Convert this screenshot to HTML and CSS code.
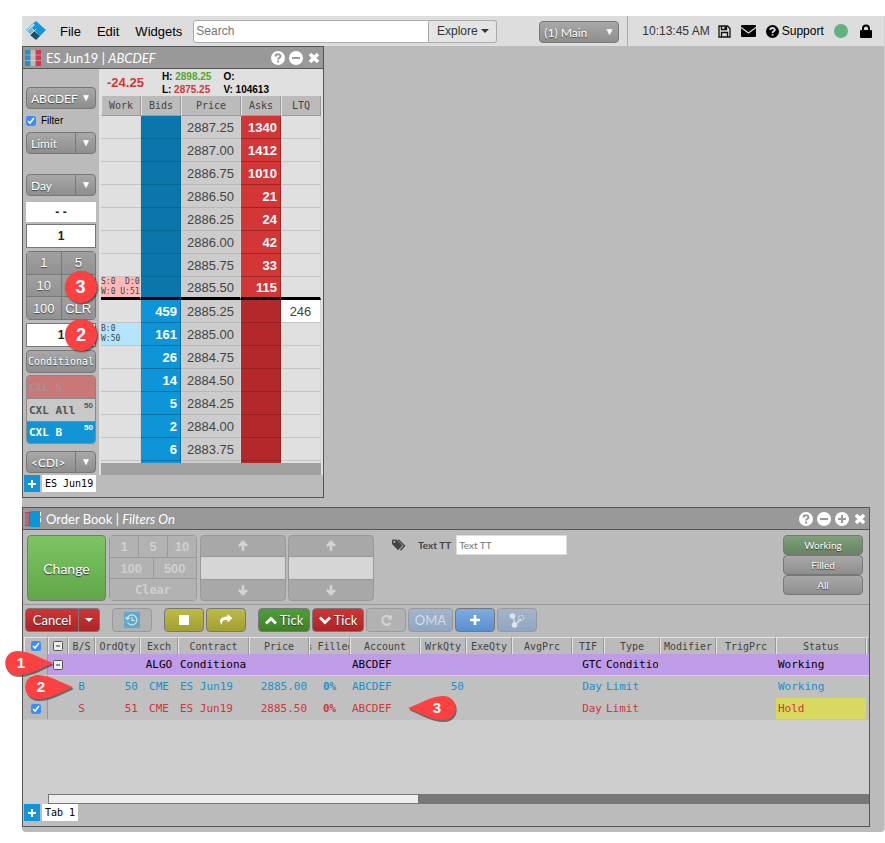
FILE: index.html
```html
<!DOCTYPE html>
<html lang="en">
<head>
    <meta charset="utf-8">
    <title>Main</title>
    <link rel="stylesheet" href="styles.css">
</head>
<body>
    <svg width="0" height="0" class="defs">
        <symbol id="help" viewBox="0 0 14 14"><circle cx="7" cy="7" r="7" fill="currentColor"/><path class="cut" d="M4.6 5.4C4.6 2.6 9.5 2.6 9.5 5.2C9.5 6.9 7.1 6.7 7.1 8.5M7.1 9.6V11.4"/></symbol>
        <symbol id="minus" viewBox="0 0 14 14"><circle cx="7" cy="7" r="7" fill="currentColor"/><path class="cut" d="M3 7H11"/></symbol>
        <symbol id="plus" viewBox="0 0 14 14"><circle cx="7" cy="7" r="7" fill="currentColor"/><path class="cut" d="M3 7H11M7 3V11"/></symbol>
        <symbol id="close" viewBox="0 0 14 14"><path d="M3 3L11 11M11 3L3 11" stroke="currentColor" stroke-width="3.6"/></symbol>
        <symbol id="arrow" viewBox="0 0 12 12"><path d="M6 11V2M2 6L6 2L10 6" fill="none" stroke="currentColor" stroke-width="2.5"/></symbol>
        <symbol id="collapse" viewBox="0 0 10 10"><rect x="0.5" y="0.5" width="9" height="9" rx="1" fill="#eee" stroke="#555"/><path d="M3 5H7" stroke="#333"/></symbol>
    </svg>

    <div class="app">
        <header class="topbar">
            <svg class="logo" viewBox="0 0 20 20"><path d="M10 0L20 9L14 15L4 5Z" fill="#1497d4"/><path d="M7 2L9 4L2 11L0 9Z" fill="#8fd0ea"/><path d="M4 6L9 11L6 15L0 9Z" fill="#6fb9d8"/><path d="M8 10L14 15L10 19L4 14Z" fill="#17526e"/><path d="M1 10L8 3M4 14L10 8" stroke="#ddd" stroke-width="1"/></svg>
            <nav class="menu">
                <a href="#">File</a>
                <a href="#">Edit</a>
                <a href="#">Widgets</a>
            </nav>
            <div class="search">
                <input type="text" placeholder="Search" aria-label="Search">
                <button>Explore <span class="caret"></span></button>
            </div>
            <div class="select workspace"><select aria-label="Workspace"><option>(1) Main</option></select></div>
            <div class="tools">
                <span class="clock">10:13:45 AM</span>
                <svg width="13" height="13" viewBox="0 0 13 13"><path d="M1 1H9.5L12 3.5V12H1ZM3.5 1V4.5H8.5V1M3.5 12V7.5H9.5V12" fill="none" stroke="#111" stroke-width="1.3"/><path d="M6.5 1H8.5V4H6.5Z" fill="#111"/></svg>
                <svg width="15" height="12" viewBox="0 0 15 12"><rect width="15" height="12" rx="1"/><path d="M0 2.5L7.5 8L15 2.5" fill="none" stroke="#ddd" stroke-width="1.2"/></svg>
                <a class="support" href="#"><svg width="13" height="13"><use href="#help"/></svg>Support</a>
                <span class="online"></span>
                <svg width="12" height="14" viewBox="0 0 12 14"><rect y="6" width="12" height="8" rx="1"/><path d="M3 7V4.5C3 0.5 9 0.5 9 4.5V7" fill="none" stroke="#000" stroke-width="2"/></svg>
            </div>
        </header>

        <section class="window trader">
            <div class="titlebar">
                <svg class="wicon" viewBox="0 0 16 16"><path fill="#1994d0" d="M0 0H5V16H0Z"/><path fill="#bbb" d="M6 0H10V16H6Z"/><path fill="#d5354e" d="M11 0H16V16H11Z"/><path d="M0 5H16M0 10.5H16" stroke="#ddd" stroke-opacity=".5"/></svg>
                <h2>ES Jun19 | <em>ABCDEF</em></h2>
                <button aria-label="Help"><svg><use href="#help"/></svg></button>
                <button aria-label="Minimize"><svg><use href="#minus"/></svg></button>
                <button aria-label="Close"><svg><use href="#close"/></svg></button>
            </div>
            <div class="trader-body">
                <div class="sidebar">
                    <div class="select"><select aria-label="Account"><option>ABCDEF</option></select></div>
                    <label class="filter"><input type="checkbox" checked> Filter</label>
                    <div class="select split"><select aria-label="Order type"><option>Limit</option></select></div>
                    <div class="select split tif"><select aria-label="Time in force"><option>Day</option></select></div>
                    <input class="position" type="text" value="- -" aria-label="Position">
                    <input class="qty" type="text" value="1" aria-label="Quantity">
                    <div class="pad">
                        <button>1</button>
                        <button>5</button>
                        <button>10</button>
                        <button aria-label="Add quantity"><span class="badge">3</span></button>
                        <button>100</button>
                        <button>CLR</button>
                    </div>
                    <div class="qty-wrap">
                        <input class="qty" type="text" value="1" aria-label="Conditional quantity">
                        <span class="badge small">2</span>
                    </div>
                    <button class="conditional">Conditional</button>
                    <div class="cxl">
                        <button class="cxl-s">CXL S</button>
                        <button class="cxl-all">CXL All<sup>50</sup></button>
                        <button class="cxl-b">CXL B<sup>50</sup></button>
                    </div>
                    <div class="select split cdi"><select aria-label="Destination"><option>&lt;CDI&gt;</option></select></div>
                </div>
                <div class="ladder">
                    <div class="summary">
                        <span class="change">-24.25</span>
                        <div><p>H: <span class="up">2898.25</span></p><p>L: <span class="down">2875.25</span></p></div>
                        <div><p>O:</p><p>V: 104613</p></div>
                    </div>
                    <table>
                        <thead>
                            <tr><th class="c-work">Work</th><th class="c-bid">Bids</th><th class="c-price">Price</th><th class="c-ask">Asks</th><th class="c-ltq">LTQ</th></tr>
                        </thead>
                        <tbody class="above">
                            <tr><td></td><td></td><td>2887.25</td><td>1340</td><td></td></tr>
                            <tr><td></td><td></td><td>2887.00</td><td>1412</td><td></td></tr>
                            <tr><td></td><td></td><td>2886.75</td><td>1010</td><td></td></tr>
                            <tr><td></td><td></td><td>2886.50</td><td>21</td><td></td></tr>
                            <tr><td></td><td></td><td>2886.25</td><td>24</td><td></td></tr>
                            <tr><td></td><td></td><td>2886.00</td><td>42</td><td></td></tr>
                            <tr><td></td><td></td><td>2885.75</td><td>33</td><td></td></tr>
                            <tr class="inside"><td class="work-sell">S:0&nbsp; D:0<br>W:0 U:51</td><td></td><td>2885.50</td><td>115</td><td></td></tr>
                        </tbody>
                        <tbody class="below">
                            <tr><td></td><td>459</td><td>2885.25</td><td></td><td class="last">246</td></tr>
                            <tr><td class="work-buy">B:0<br>W:50</td><td>161</td><td>2885.00</td><td></td><td></td></tr>
                            <tr><td></td><td>26</td><td>2884.75</td><td></td><td></td></tr>
                            <tr><td></td><td>14</td><td>2884.50</td><td></td><td></td></tr>
                            <tr><td></td><td>5</td><td>2884.25</td><td></td><td></td></tr>
                            <tr><td></td><td>2</td><td>2884.00</td><td></td><td></td></tr>
                            <tr><td></td><td>6</td><td>2883.75</td><td></td><td></td></tr>
                            <tr class="stub"><td></td><td></td><td></td><td></td><td></td></tr>
                        </tbody>
                    </table>
                    <div class="ladder-foot"></div>
                </div>
            </div>
            <div class="tabs">
                <button class="add" aria-label="Add tab"></button>
                <button class="tab">ES Jun19</button>
            </div>
        </section>

        <section class="window book">
            <div class="titlebar">
                <svg class="wicon" viewBox="0 0 16 16"><path fill="#d5354e" d="M0 1H5V15H0Z"/><path d="M0 3H4M0 5H4M0 7H4M0 9H4M0 11H4M0 13H4" stroke="#999"/><path fill="#0a96d8" d="M5 0H15V16H5Z"/><path d="M15.5 1V5M15.5 7V11" stroke="#fff"/></svg>
                <h2>Order Book | <em>Filters On</em></h2>
                <button aria-label="Help"><svg><use href="#help"/></svg></button>
                <button aria-label="Minimize"><svg><use href="#minus"/></svg></button>
                <button aria-label="Maximize"><svg><use href="#plus"/></svg></button>
                <button aria-label="Close"><svg><use href="#close"/></svg></button>
            </div>
            <div class="controls">
                <button class="btn-change">Change</button>
                <div class="bigpad">
                    <div><button disabled>1</button><button disabled>5</button><button disabled>10</button></div>
                    <div><button disabled>100</button><button disabled>500</button></div>
                    <div><button class="clear" disabled>Clear</button></div>
                </div>
                <div class="stepper">
                    <button aria-label="Increase price" disabled><svg><use href="#arrow"/></svg></button>
                    <input type="text" aria-label="Price" disabled>
                    <button aria-label="Decrease price" disabled><svg class="flip"><use href="#arrow"/></svg></button>
                </div>
                <div class="stepper">
                    <button aria-label="Increase quantity" disabled><svg><use href="#arrow"/></svg></button>
                    <input type="text" aria-label="Quantity" disabled>
                    <button aria-label="Decrease quantity" disabled><svg class="flip"><use href="#arrow"/></svg></button>
                </div>
                <div class="texttt">
                    <svg width="14" height="12" viewBox="0 0 14 12"><path d="M0 1.5Q0 .5 1 .5H4.5L10.5 6.5L6 11.2L0 5Z" fill="#444"/><circle cx="2.4" cy="2.7" r="1" fill="#bbb"/><path d="M6.2 .8L12.5 6.8L8.5 11.2" fill="none" stroke="#444" stroke-width="1.4"/></svg>
                    <label for="texttt">Text TT</label>
                    <input id="texttt" type="text" placeholder="Text TT">
                </div>
                <div class="states">
                    <button class="active">Working</button>
                    <button>Filled</button>
                    <button>All</button>
                </div>
            </div>
            <div class="toolbar">
                <div class="group cancel">
                    <button class="red">Cancel</button>
                    <button class="red more" aria-label="More cancel options"><span class="caret"></span></button>
                </div>
                <div class="group">
                    <button class="off" aria-label="History" disabled><svg width="16" height="16" viewBox="0 0 16 16"><rect width="16" height="16" fill="#5ea9cc"/><path d="M3.2 6A5 5 0 1 1 3.5 10.5M1.5 5L3.4 7.5L5.6 5.5M8 5V8.5H11" fill="none" stroke="#d3e2ea" stroke-width="1.2"/></svg></button>
                </div>
                <div class="group">
                    <button class="yellow" aria-label="Hold"><svg width="10" height="10"><path d="M0 0H10V10H0Z" fill="#fff"/></svg></button>
                    <button class="yellow" aria-label="Release"><svg width="14" height="12" viewBox="0 0 14 12"><path d="M8.5 0L13.5 4.2L8.5 8.4V6C4.5 5.8 3 7 2.6 11C-.8 6.5 1.5 2.6 8.5 2.5Z" fill="#fff"/></svg></button>
                </div>
                <div class="group">
                    <button class="green"><svg width="12" height="9" viewBox="0 0 12 9"><path d="M1 7.5L6 2.5L11 7.5" fill="none" stroke="#fff" stroke-width="2.8"/></svg>Tick</button>
                    <button class="red tick"><svg width="12" height="9" viewBox="0 0 12 9"><path d="M1 1.5L6 6.5L11 1.5" fill="none" stroke="#fff" stroke-width="2.8"/></svg>Tick</button>
                    <button class="off" aria-label="Refresh" disabled><svg width="13" height="13" viewBox="0 0 13 13"><path d="M10.5 9A4.5 4.5 0 1 1 10 3.2" fill="none" stroke="#d2d2d2" stroke-width="2.2"/><path d="M12 .8V5.6H7.2Z" fill="#d2d2d2"/></svg></button>
                    <button class="paleblue oma" disabled>OMA</button>
                    <button class="blue" aria-label="Add"><svg width="12" height="12"><path d="M6 1V11M1 6H11" stroke="#fff" stroke-width="2.6"/></svg></button>
                    <button class="paleblue" aria-label="Link" disabled><svg width="16" height="15" viewBox="0 0 16 15"><path d="M4 3L6 12L12 6" fill="none" stroke="#dde4ec" stroke-width="1.2"/><circle cx="3.5" cy="3" r="2.8" fill="#dde4ec"/><circle cx="5.5" cy="12" r="2.8" fill="#dde4ec"/><circle cx="12" cy="5" r="2.6" fill="none" stroke="#dde4ec" stroke-dasharray="2 1"/></svg></button>
                </div>
            </div>

            <table class="orders">
                <colgroup>
                    <col class="w-check"><col class="w-exp"><col class="w-bs"><col class="w-ord"><col class="w-exch"><col class="w-contract"><col class="w-price"><col class="w-filled"><col class="w-account"><col class="w-qty"><col class="w-qty"><col class="w-avg"><col class="w-tif"><col class="w-type"><col class="w-type"><col class="w-avg"><col class="w-status"><col>
                </colgroup>
                <thead>
                    <tr>
                        <th><input type="checkbox" aria-label="Select all orders" checked></th>
                        <th><svg width="10" height="10"><use href="#collapse"/></svg></th>
                        <th>B/S</th><th>OrdQty</th><th>Exch</th><th>Contract</th><th>Price</th><th><span class="mid">% Filled</span></th><th>Account</th><th>WrkQty</th><th>ExeQty</th><th>AvgPrc</th><th>TIF</th><th>Type</th><th>Modifier</th><th>TrigPrc</th><th>Status</th><th></th>
                    </tr>
                </thead>
                <tbody>
                    <tr class="algo">
                        <td class="pick"><svg class="pin pin-one" viewBox="0 0 50 27"><path class="shade" d="M50 14C40 10 28 2 15 2C-2 2 -2 26 15 26C28 26 40 18 50 14Z"/><path class="drop" d="M49 12C39 9 27 0 14 0C-3 0 -3 24 14 24C27 24 39 16 49 12Z"/><text x="17" y="17">1</text></svg></td>
                        <td class="exp"><svg width="10" height="10"><use href="#collapse"/></svg></td>
                        <td></td><td></td><td class="center">ALGO</td><td><span class="clip">Conditional</span></td><td></td><td></td><td>ABCDEF</td><td></td><td></td><td></td><td class="num">GTC</td><td><span class="clip">Conditional</span></td><td></td><td></td><td>Working</td><td></td>
                    </tr>
                    <tr class="buy">
                        <td class="pick"><svg class="pin pin-two" viewBox="0 0 50 27"><path class="shade" d="M50 14C40 10 28 2 15 2C-2 2 -2 26 15 26C28 26 40 18 50 14Z"/><path class="drop" d="M49 12C39 9 27 0 14 0C-3 0 -3 24 14 24C27 24 39 16 49 12Z"/><text x="17" y="17">2</text></svg></td>
                        <td></td><td class="center">B</td><td class="num">50</td><td class="center">CME</td><td>ES Jun19</td><td class="num">2885.00</td><td class="center pct">0%</td><td>ABCDEF</td><td class="num">50</td><td></td><td></td><td class="num">Day</td><td>Limit</td><td></td><td></td><td>Working</td><td></td>
                    </tr>
                    <tr class="sell">
                        <td class="pick"><input type="checkbox" aria-label="Select order" checked></td>
                        <td></td><td class="center">S</td><td class="num">51</td><td class="center">CME</td><td>ES Jun19</td><td class="num">2885.50</td><td class="center pct">0%</td><td>ABCDEF</td>
                        <td class="pinned"><svg class="pin pin-three" viewBox="0 0 50 27"><path class="shade" d="M1 14C11 10 23 2 36 2C53 2 53 26 36 26C23 26 11 18 1 14Z"/><path class="drop" d="M0 12C10 9 22 0 35 0C52 0 52 24 35 24C22 24 10 16 0 12Z"/><text x="29" y="17">3</text></svg></td>
                        <td></td><td></td><td class="num">Day</td><td>Limit</td><td></td><td></td><td class="hold">Hold</td><td></td>
                    </tr>
                </tbody>
            </table>
            <div class="blank"></div>
            <div class="scrollbar"><div class="thumb"></div></div>
            <div class="tabs">
                <button class="add" aria-label="Add tab"></button>
                <button class="tab">Tab 1</button>
            </div>
        </section>
    </div>
</body>
</html>
```
FILE: styles.css
```css
* {
    box-sizing: border-box;
    margin: 0;
    padding: 0;
}

body {
    padding: 16px 0 11px 22px;
    background: #fff;
    font-family: "Liberation Sans", Arial, sans-serif;
    font-size: 12px;
    color: #000;
}

button,
input,
select {
    font: inherit;
    color: inherit;
}

button {
    border: none;
    display: flex;
    align-items: center;
    justify-content: center;
}

a {
    color: inherit;
    text-decoration: none;
}

.defs {
    position: absolute;
}

.app {
    background: #bbb;
    padding-bottom: 5px;
    border-right: 1px solid #d0d0d0;
    border-radius: 0 0 4px 4px;
}

.caret {
    border: 4px solid transparent;
    border-top-color: currentColor;
    border-bottom: none;
}

.cut {
    fill: none;
    stroke: var(--cut, #999);
    stroke-width: 2;
}

/* top bar */
.topbar {
    --cut: #ddd;
    display: flex;
    align-items: center;
    height: 30px;
    background: #ddd;
    padding-left: 4px;
}

.logo {
    width: 20px;
    height: 20px;
}

.menu {
    display: flex;
    gap: 16px;
    padding: 0 11px 0 14px;
    font-size: 13px;
}

.search {
    display: flex;
    width: 304px;
    height: 23px;
    color: #333;
}

.search input {
    flex: 1;
    min-width: 0;
    border: 1px solid #aaa;
    border-radius: 3px 0 0 3px;
    padding-left: 2px;
}

.search button {
    width: 68px;
    border: 1px solid #aaa;
    border-left: none;
    border-radius: 0 3px 3px 0;
    background: #e4e4e4;
    gap: 3px;
}

.select {
    position: relative;
    height: 22px;
}

.select select {
    appearance: none;
    width: 100%;
    height: 22px;
    padding-left: 4px;
    border: 1px solid #777;
    border-radius: 4px;
    background: linear-gradient(#a8a8a8, #8e8e8e);
    color: #fff;
    font-family: Lato, sans-serif;
    font-size: 12px;
    text-shadow: 0 1px 1px #444;
}

.select::after {
    content: "▼";
    position: absolute;
    right: 0;
    top: 0;
    width: 20px;
    line-height: 22px;
    text-align: center;
    font-size: 10px;
    color: #fff;
    pointer-events: none;
}

.split::after {
    border-left: 1px solid #777;
}

.workspace {
    width: 80px;
    margin: 2px 8px 0 42px;
}

.tools {
    display: flex;
    align-items: center;
    gap: 10px;
    height: 30px;
    padding-left: 14px;
    border-left: 1px solid #aaa;
}

.clock {
    color: #333;
    margin-right: -2px;
}

.support {
    display: flex;
    align-items: center;
    gap: 3px;
}

.online {
    width: 14px;
    height: 14px;
    border-radius: 50%;
    background: #62b17f;
    margin-right: 2px;
}

/* windows */
.window {
    border: 1px solid #555;
    background: #bbb;
}

.titlebar {
    display: flex;
    align-items: center;
    gap: 4px;
    height: 22px;
    padding: 0 2px;
    background: #999;
    border-bottom: 1px solid #555;
    color: #fff;
}

.titlebar h2 {
    flex: 1;
    padding-left: 1px;
    font: 13px Lato, sans-serif;
}

.titlebar button,
.titlebar button svg {
    width: 14px;
    height: 14px;
    background: none;
}

.wicon {
    width: 16px;
    height: 16px;
}

.tabs {
    display: flex;
    gap: 2px;
    height: 22px;
    padding: 0 1px 4px;
    font-family: "DejaVu Sans Mono", monospace;
    font-size: 10px;
}

.tabs .add {
    width: 16px;
    height: 17px;
    background:
        linear-gradient(#fff, #fff) center / 8px 2px no-repeat,
        linear-gradient(#fff, #fff) center / 2px 8px no-repeat,
        #1195d6;
}

.tabs .tab {
    height: 17px;
    padding: 0 3px;
    background: #fff;
}

/* trader */
.trader {
    width: 302px;
}

.trader-body {
    display: flex;
}

.sidebar {
    width: 76px;
    padding: 18px 3px 0;
}

.filter {
    display: flex;
    align-items: center;
    gap: 5px;
    height: 13px;
    margin: 5px 0;
    font-size: 10px;
}

input[type="checkbox"] {
    width: 10px;
    height: 10px;
    accent-color: #3b8dff;
}

.tif {
    margin: 20px 0 6px;
}

.position,
.qty {
    display: block;
    width: 100%;
    text-align: center;
    font-weight: bold;
    border: 1px solid #fff;
    background: #fff;
    color: #222;
}

.position {
    height: 20px;
    margin-bottom: 2px;
}

.qty {
    height: 24px;
    border-color: #777;
}

.pad {
    display: grid;
    grid-template-columns: 1fr 1fr;
    height: 69px;
    margin: 3px 0;
    border: 1px solid #777;
    border-radius: 4px;
    background: #777;
    gap: 1px;
}

.pad button {
    position: relative;
    background: linear-gradient(#a0a0a0, #929292);
    color: #fff;
    font-size: 13px;
    text-shadow: 0 1px 1px #444;
}

.badge {
    position: absolute;
    left: 3px;
    top: -4px;
    width: 32px;
    height: 32px;
    z-index: 1;
    border-radius: 50%;
    background: #fb4141;
    box-shadow: 1px 1px 2px rgba(0, 0, 0, 0.6);
    color: #fff;
    font: bold 18px/32px "Liberation Sans", Arial, sans-serif;
    text-align: center;
    text-shadow: none;
}

.badge.small {
    left: 39px;
    top: -4px;
}

.qty-wrap {
    position: relative;
}

.conditional {
    width: 100%;
    height: 23px;
    margin: 3px 0 2px;
    border: 1px solid #777;
    border-radius: 4px;
    background: linear-gradient(#a8a8a8, #8e8e8e);
    color: #fff;
    font-family: "DejaVu Sans Mono", monospace;
    font-size: 10px;
    text-shadow: 0 1px 1px #444;
}

.cxl {
    margin-bottom: 7px;
    border: 1px solid #888;
    border-radius: 4px;
    overflow: hidden;
}

.cxl button {
    width: 100%;
    height: 23px;
    justify-content: flex-start;
    padding: 0 2px;
    border-bottom: 1px solid #888;
    font-family: "DejaVu Sans Mono", monospace;
    font-size: 11px;
    font-weight: bold;
}

.cxl button:last-child {
    height: 21px;
    border-bottom: none;
}

.cxl sup {
    margin: -10px 0 0 auto;
    font: bold 8px "Liberation Sans", Arial, sans-serif;
}

.cxl .cxl-s {
    background: #c97777;
    color: #a59393;
}

.cxl .cxl-all {
    background: #c8c8c8;
    color: #555;
}

.cxl .cxl-b {
    background: #1195d6;
    color: #fff;
}

.ladder {
    flex: 1;
    padding: 0 2px;
    background: #e0e0e0;
}

.summary {
    display: flex;
    align-items: center;
    gap: 12px;
    height: 27px;
    padding-left: 6px;
    font-size: 10px;
    font-weight: bold;
    line-height: 13px;
}

.change {
    margin-right: 6px;
    font-size: 13px;
}

.change,
.down {
    color: #d23535;
}

.up {
    color: #55a630;
}

.ladder table,
.orders {
    width: 100%;
    table-layout: fixed;
    border-collapse: separate;
    border-spacing: 0;
}

th {
    background: #bbb;
    border-left: 1px solid #e4e4e4;
    border-right: 1px solid #999;
    font: 10px "DejaVu Sans Mono", monospace;
    color: #444;
    text-align: center;
    white-space: nowrap;
    overflow: hidden;
}

.ladder th {
    height: 20px;
    border-bottom: 1px solid #999;
}

.c-price {
    width: 60px;
}

.ladder td {
    height: 23px;
    border-bottom: 1px solid #c4c4c4;
    border-right: 1px solid #d4d4d4;
    font-size: 13px;
    color: #444;
}

.ladder td:nth-child(2),
.ladder td:nth-child(4) {
    padding-right: 3px;
    text-align: right;
    font-weight: bold;
    color: #fff;
}

.ladder td:nth-child(3) {
    background: #ccc;
    text-align: center;
    border-bottom-color: #b8b8b8;
}

.above td:nth-child(2) {
    background: #0b76ab;
    border-color: #0a6896;
}

.above td:nth-child(4) {
    background: #d33636;
    border-color: #a02424;
}

.below td:nth-child(2) {
    background: #0e95d7;
    border-color: #0a6fa3;
}

.below td:nth-child(4) {
    background: #b2282b;
    border-color: #9c2024;
}

.ladder .inside td {
    border-bottom: 3px solid #000;
}

.ladder .work-sell,
.ladder .work-buy {
    font: 8px/10px "DejaVu Sans Mono", monospace;
    white-space: nowrap;
}

.work-sell {
    background: #ffb9b9;
}

.work-buy {
    background: #b3e5ff;
}

.ladder .last {
    background: #fff;
    text-align: center;
}

.ladder .stub td {
    height: 2px;
    border-bottom: none;
}

.ladder-foot {
    height: 12px;
    background: #a0a0a0;
}

/* order book */
.book {
    margin: 9px 14px 0 0;
}

.controls {
    display: flex;
    align-items: flex-start;
    gap: 2px;
    height: 75px;
    padding: 5px 6px 0 4px;
    border-bottom: 1px solid #999;
}

.btn-change {
    width: 79px;
    height: 66px;
    margin-right: 1px;
    border: 1px solid #777;
    border-radius: 4px;
    background: linear-gradient(#7cc464, #5fa748);
    color: #fff;
    font: 14px Lato, sans-serif;
    text-shadow: 0 1px 1px #333;
}

.bigpad {
    width: 88px;
    height: 66px;
    margin-right: 1px;
    border: 1px solid #999;
    border-radius: 4px;
    display: flex;
    flex-direction: column;
}

.bigpad div {
    flex: 1;
    display: flex;
}

.bigpad div + div {
    border-top: 1px solid #999;
}

.bigpad button {
    flex: 1;
    background: #b2b2b2;
    color: #cfcfcf;
    font-size: 13px;
    font-weight: bold;
}

.bigpad button + button {
    border-left: 1px solid #999;
}

.bigpad .clear {
    font-family: "DejaVu Sans Mono", monospace;
    font-size: 12px;
}

.stepper {
    width: 86px;
    border: 1px solid #999;
    border-radius: 4px;
    background: #a8a8a8;
}

.stepper button {
    width: 100%;
    height: 20px;
    background: none;
    color: #d4d4d4;
}

.stepper input {
    display: block;
    width: 100%;
    height: 24px;
    border: 1px solid #999;
    border-width: 1px 0;
    background: #d6d6d6;
}

.stepper svg {
    width: 12px;
    height: 12px;
}

.flip {
    transform: rotate(180deg);
}

.texttt {
    display: flex;
    align-items: center;
    padding-left: 16px;
    color: #444;
    font-family: Lato, sans-serif;
    font-size: 10px;
}

.texttt label {
    margin: 0 5px 0 12px;
    font-weight: bold;
}

.texttt input {
    width: 111px;
    height: 20px;
    padding-left: 2px;
    border: 1px solid #ddd;
    background: #fff;
}

.states {
    margin-left: auto;
    width: 80px;
}

.states button {
    width: 100%;
    height: 20px;
    border: 1px solid #777;
    border-radius: 4px;
    background: linear-gradient(#a8a8a8, #8e8e8e);
    color: #fff;
    font: 10px Lato, sans-serif;
    text-shadow: 0 1px 1px #333;
}

.states .active {
    background: linear-gradient(#81a07d, #65865f);
}

.toolbar {
    display: flex;
    gap: 12px;
    height: 32px;
    padding: 3px 2px 0;
}

.group {
    display: flex;
    gap: 2px;
}

.toolbar button {
    width: 40px;
    height: 24px;
    gap: 3px;
    border: 1px solid #777;
    border-radius: 4px;
    color: #fff;
    font: 13px Lato, sans-serif;
    text-shadow: 0 1px 1px #333;
}

.toolbar .red {
    width: 54px;
    background: linear-gradient(#d03536, #ad2426);
}

.toolbar .green,
.toolbar .tick {
    width: 52px;
}

.toolbar .green {
    background: linear-gradient(#4f9f38, #3d8229);
}

.cancel {
    gap: 0;
}

.toolbar .cancel .red:first-child {
    border-radius: 4px 0 0 4px;
}

.toolbar .more {
    width: 21px;
    border-left: none;
    border-radius: 0 4px 4px 0;
}

.yellow {
    background: linear-gradient(#bdbb47, #a29f33);
}

.blue {
    background: linear-gradient(#7fabe0, #5a8fd0);
}

.toolbar .off,
.toolbar .paleblue {
    border-color: #999;
    text-shadow: none;
}

.off {
    background: #b2b2b2;
}

.paleblue {
    background: linear-gradient(#a4b5cb, #90a6c2);
}

.toolbar .oma {
    width: 45px;
    color: #d3dbe5;
}

.orders {
    border-left: 1px solid #bbb;
}

.orders th {
    height: 17px;
    border-top: 1px solid #e4e4e4;
}

.orders th input,
.orders th svg,
.pick input,
.exp svg {
    display: block;
    margin: 0 auto;
}

.mid {
    display: flex;
    justify-content: center;
}

.w-check { width: 24px; }
.w-exp { width: 20px; }
.w-bs { width: 27px; }
.w-ord { width: 45px; }
.w-exch { width: 38px; }
.w-contract { width: 71px; }
.w-price { width: 60px; }
.w-filled { width: 41px; }
.w-account { width: 70px; }
.w-qty { width: 46px; }
.w-avg { width: 60px; }
.w-tif { width: 32px; }
.w-type { width: 56px; }
.w-status { width: 90px; }

.orders td {
    height: 22px;
    padding: 0 2px;
    border-bottom: 1px solid #c0c0c0;
    background: #c0c0c0;
    font: 11px "DejaVu Sans Mono", monospace;
    white-space: nowrap;
}

.orders .algo td {
    background: #c09be8;
    border-bottom-color: #d4d4d4;
}

.orders .pick {
    position: relative;
    background: #b9b9b9;
    border-right: 1px solid #999;
}

.orders .algo .pick {
    background: #b9b9b9;
}

.buy {
    color: #1590d0;
}

.sell {
    color: #d23535;
}

.orders .center {
    text-align: center;
}

.orders .pct {
    font-weight: bold;
}

.orders .num {
    text-align: right;
}

.clip {
    display: block;
    overflow: hidden;
}

.orders .hold {
    background: #d8d95f;
}

.orders .pinned {
    position: relative;
}

.pin {
    position: absolute;
    z-index: 1;
    width: 50px;
    height: 27px;
}

.pin-one {
    left: -20px;
    top: -3px;
}

.pin-two {
    left: 0;
    top: -1px;
}

.pin-three {
    left: -12px;
    top: -2px;
}

.pin .drop {
    fill: #fb4141;
}

.pin .shade {
    fill: #444;
    fill-opacity: 0.7;
}

.pin text {
    fill: #fff;
    font: bold 15px "Liberation Sans", Arial, sans-serif;
    text-anchor: middle;
}

.blank {
    height: 74px;
    background: #cdcdcd;
}

.scrollbar {
    padding-left: 25px;
    background: #cdcdcd;
}

.thumb {
    height: 10px;
    border: 1px solid #777;
    background: linear-gradient(to right, #eee 45%, #777 45%);
}
```
